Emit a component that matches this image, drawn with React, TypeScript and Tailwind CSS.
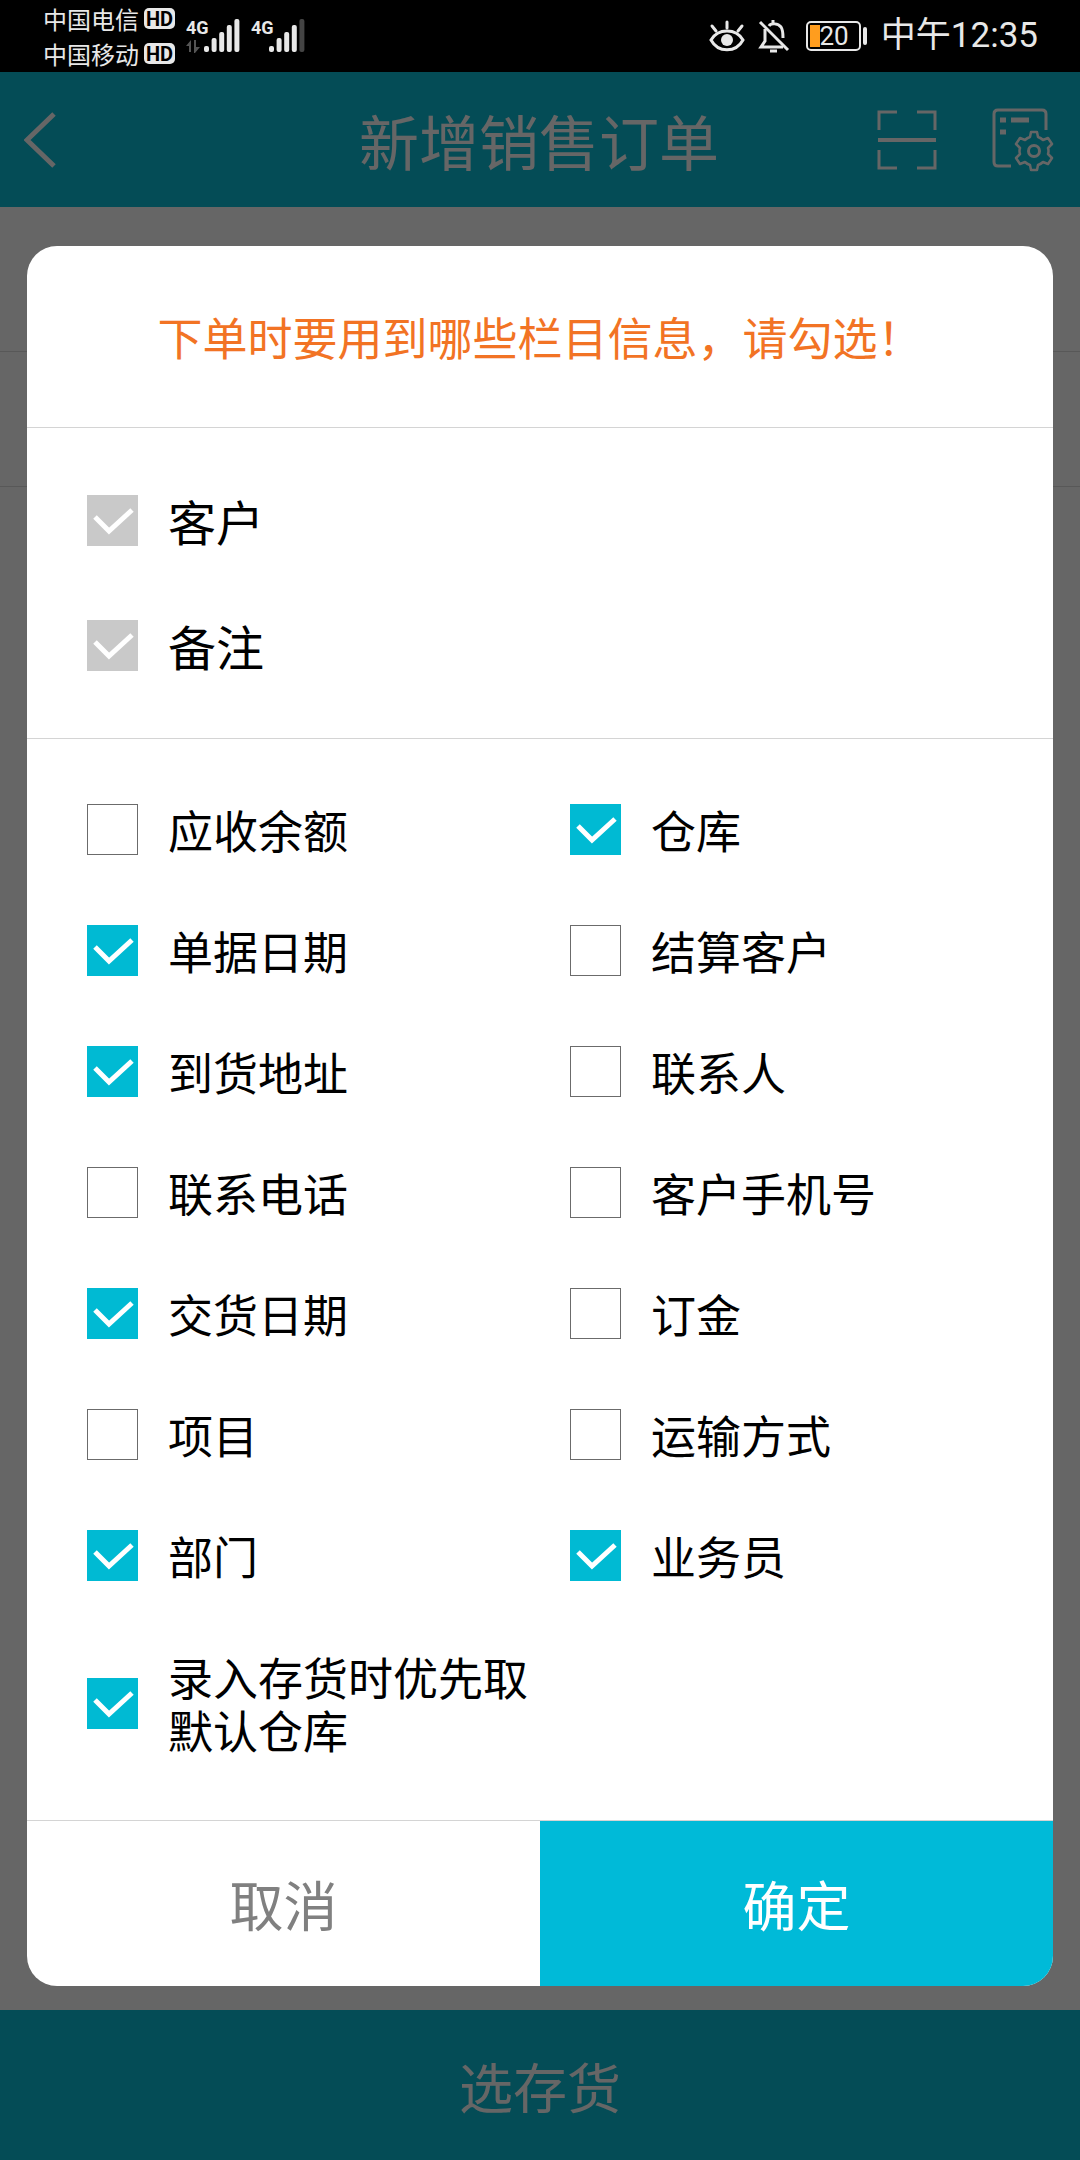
import { useState } from 'react';

type Field = { id: string; label: string; checked: boolean };

const requiredFields = [
  { id: 'customer', label: '客户' },
  { id: 'remark', label: '备注' },
];

const initialFields: Field[] = [
  { id: 'receivable', label: '应收余额', checked: false },
  { id: 'warehouse', label: '仓库', checked: true },
  { id: 'docDate', label: '单据日期', checked: true },
  { id: 'settleCustomer', label: '结算客户', checked: false },
  { id: 'address', label: '到货地址', checked: true },
  { id: 'contact', label: '联系人', checked: false },
  { id: 'phone', label: '联系电话', checked: false },
  { id: 'mobile', label: '客户手机号', checked: false },
  { id: 'deliveryDate', label: '交货日期', checked: true },
  { id: 'deposit', label: '订金', checked: false },
  { id: 'project', label: '项目', checked: false },
  { id: 'transport', label: '运输方式', checked: false },
  { id: 'department', label: '部门', checked: true },
  { id: 'salesman', label: '业务员', checked: true },
  { id: 'defaultWarehouse', label: '录入存货时优先取默认仓库', checked: true },
];

function CheckMark() {
  return (
    <svg viewBox="0 0 51 51" className="pointer-events-none col-start-1 row-start-1 size-[51px]" fill="none">
      <path d="M8 22 L22 36 L45 15" stroke="#fff" strokeWidth="5" />
    </svg>
  );
}

function Signal({ bars, arrows }: { bars: number; arrows?: boolean }) {
  return (
    <svg width="54" height="36" viewBox="0 0 54 36" fill="#e8e8e8">
      <text x="0" y="16" fontSize="18" fontWeight="700">
        4G
      </text>
      {arrows && <path d="M0 28 L5 22 V34 H3 V28 Z M8 22 H10 V29 H14 L9 35 H8 Z" fill="#555" />}
      {[0, 1, 2, 3, 4].map((i) => (
        <rect
          key={i}
          x={18 + i * 7.6}
          y={[28, 20, 14, 7, 1][i]}
          width="5"
          height={[6, 14, 20, 27, 33][i]}
          rx="2"
          fill={i < bars ? '#e8e8e8' : '#444'}
        />
      ))}
    </svg>
  );
}

function StatusBar() {
  return (
    <div className="flex h-[72px] items-center justify-between bg-black pr-[42px] pl-[43px] font-[Roboto,'Noto_Sans_CJK_SC',sans-serif] text-[#e8e8e8]">
      <div className="flex items-center">
        <div className="flex flex-col font-['Noto_Sans_CJK_SC',sans-serif] text-2xl leading-[35px]">
          {['中国电信', '中国移动'].map((carrier) => (
            <div key={carrier} className="flex items-center gap-[5px]">
              <span>{carrier}</span>
              <span className="flex h-[21px] w-[31px] items-center justify-center rounded-[5px] bg-[#e8e8e8] font-[Roboto,sans-serif] text-xl font-bold text-black">
                HD
              </span>
            </div>
          ))}
        </div>
        <div className="ml-[11px] flex gap-[11px]">
          <Signal bars={5} arrows />
          <Signal bars={4} />
        </div>
      </div>
      <div className="flex items-center gap-[13px]">
        <svg width="36" height="34" viewBox="0 0 36 34" fill="none" stroke="#e8e8e8" strokeWidth="3" strokeLinecap="round">
          <path d="M2 21 C9 9 27 9 34 21 C27 34 9 34 2 21 Z" />
          <path d="M18 3 V9 M3 7 L7 12 M33 7 L29 12" />
          <circle cx="18" cy="21" r="6" fill="#e8e8e8" stroke="none" />
        </svg>
        <svg width="32" height="34" viewBox="0 0 32 34" fill="none" stroke="#e8e8e8" strokeWidth="3">
          <path d="M7 10 V22 L3 28 H25 M11 7 C13 4 20 4 23 8 C25 11 25 14 25 19 M15 5 V1" />
          <path d="M2 3 L30 31" />
          <path d="M12 32 H19" />
        </svg>
        <svg className="ml-[3px]" width="62" height="30" viewBox="0 0 62 30">
          <rect x="1" y="1" width="53" height="28" rx="4" fill="none" stroke="#e8e8e8" strokeWidth="2" />
          <rect x="4" y="4" width="10" height="22" fill="#ff9d1e" />
          <rect x="57" y="6" width="4" height="18" rx="2" fill="#e8e8e8" />
          <text x="28" y="24" fontSize="26" textAnchor="middle" fill="#e8e8e8">
            20
          </text>
        </svg>
        <span className="text-[35px]">中午12:35</span>
      </div>
    </div>
  );
}

function ScanIcon() {
  return (
    <svg width="60" height="60" viewBox="0 0 60 60" fill="none" stroke="#fff" strokeWidth="3">
      <path d="M2 20 V2 H20 M40 2 H58 V20 M58 40 V58 H40 M20 58 H2 V40" />
      <path d="M1 30 H59" strokeWidth="4" />
    </svg>
  );
}

function FormSettingsIcon() {
  return (
    <svg width="62" height="64" viewBox="0 0 62 64" fill="none" stroke="#fff" strokeWidth="3">
      <path d="M19 58 H6 Q2 58 2 54 V6 Q2 2 6 2 H50 Q54 2 54 6 V22" />
      <path d="M8 12 H14 M19 12 H37 M8 24 H14" strokeWidth="5" />
      <path
        d="M39 24 H45 L46 29 Q49 30 51 32 L56 30 L60 36 L56 40 Q57 43 56 46 L60 50 L56 56 L51 54 Q49 56 46 57 L45 62 H39 L38 57 Q35 56 33 54 L28 56 L24 50 L28 46 Q27 43 28 40 L24 36 L28 30 L33 32 Q35 30 38 29 Z"
        strokeLinejoin="round"
        strokeWidth="2.5"
      />
      <circle cx="42" cy="43" r="5.5" />
    </svg>
  );
}

export default function App() {
  const [fields, setFields] = useState(initialFields);

  const toggle = (id: string) => {
    setFields(fields.map((f) => (f.id === id ? { ...f, checked: !f.checked } : f)));
  };

  return (
    <div className="flex min-h-screen flex-col bg-white font-['Noto_Sans_CJK_SC',sans-serif]">
      <StatusBar />

      <div className="relative flex flex-1 flex-col">
        <header className="grid h-[135px] grid-cols-[1fr_auto_1fr] items-center bg-[#0abed6] pr-[26px] pl-6 text-white">
          <button aria-label="返回" className="justify-self-start">
            <svg width="34" height="58" viewBox="0 0 34 58" fill="none" stroke="#fff" strokeWidth="5">
              <path d="M30 3 L3 29 L30 55" />
            </svg>
          </button>
          <h1 className="text-[60px] leading-none">新增销售订单</h1>
          <div className="flex items-center gap-[55px] justify-self-end">
            <button aria-label="扫码">
              <ScanIcon />
            </button>
            <button aria-label="栏目设置">
              <FormSettingsIcon />
            </button>
          </div>
        </header>
        <main className="flex-1">
          <div className="h-[145px] border-b border-[#dcdcdc]" />
          <div className="h-[135px] border-b border-[#dcdcdc]" />
        </main>
        <footer>
          <button className="h-[150px] w-full bg-[#0abed6] text-[54px] text-white">选存货</button>
        </footer>

        <div className="absolute inset-0 flex items-center justify-center bg-black/60 px-[27px]">
          <div role="dialog" aria-labelledby="dialog-title" className="w-full overflow-hidden rounded-[30px] bg-white">
            <h2
              id="dialog-title"
              className="flex h-[182px] items-center justify-center border-b border-[#d4d4d4] text-[45px] text-[#f27324]"
            >
              下单时要用到哪些栏目信息，请勾选！
            </h2>

            <div className="border-b border-[#d4d4d4] py-[30px] pl-[60px]">
              {requiredFields.map((f) => (
                <label key={f.id} className="flex items-center gap-[30px] py-[34px] text-5xl leading-[57px]">
                  <span className="grid shrink-0">
                    <input
                      type="checkbox"
                      checked
                      disabled
                      className="col-start-1 row-start-1 size-[51px] appearance-none bg-[#c9c9c9]"
                    />
                    <CheckMark />
                  </span>
                  {f.label}
                </label>
              ))}
            </div>

            <div className="grid grid-cols-2 border-b border-[#d4d4d4] py-[30px] pl-[60px]">
              {fields.map((f) => (
                <label key={f.id} className="flex items-center gap-[30px] py-[34px] text-[45px] leading-[53px]">
                  <span className="grid shrink-0">
                    <input
                      type="checkbox"
                      checked={f.checked}
                      onChange={() => toggle(f.id)}
                      className="col-start-1 row-start-1 size-[51px] appearance-none border border-[#6b6b6b] checked:border-0 checked:bg-[#00bad3]"
                    />
                    {f.checked && <CheckMark />}
                  </span>
                  {f.label}
                </label>
              ))}
            </div>

            <div className="grid h-[165px] grid-cols-2 text-[54px]">
              <button className="text-[#808080]">取消</button>
              <button className="bg-[#00bad8] text-white">确定</button>
            </div>
          </div>
        </div>
      </div>
    </div>
  );
}
